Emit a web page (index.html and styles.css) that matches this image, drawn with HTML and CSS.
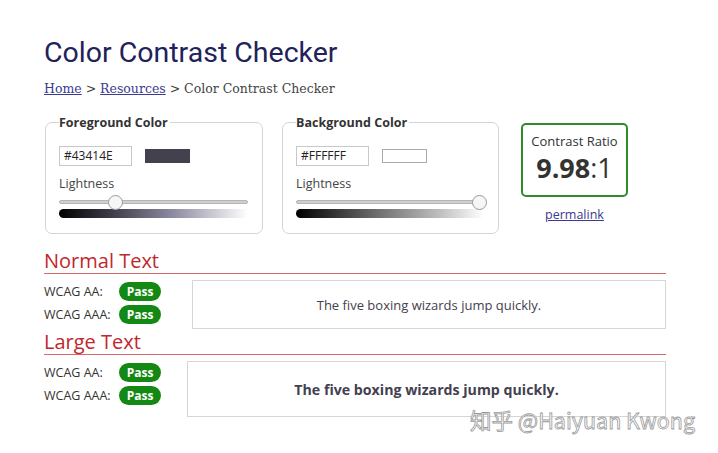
FILE: index.html
```html
<!DOCTYPE html>
<html lang="en">
<head>
    <meta charset="UTF-8">
    <title>Color Contrast Checker</title>
    <link rel="stylesheet" href="styles.css">
</head>
<body>
    <div class="container">
        <h1>Color Contrast Checker</h1>
        <p class="breadcrumb"><a href="#">Home</a> &gt; <a href="#">Resources</a> &gt; Color Contrast Checker</p>

        <!-- Selectores de color -->
        <div class="pickers">
            <fieldset class="picker">
                <legend>Foreground Color</legend>
                <div class="color-row">
                    <span class="hex">#43414E</span>
                    <span class="swatch swatch-fg"></span>
                </div>
                <div class="label">Lightness</div>
                <div class="slider">
                    <span class="thumb thumb-fg"></span>
                </div>
                <div class="gradient gradient-fg"></div>
            </fieldset>

            <fieldset class="picker">
                <legend>Background Color</legend>
                <div class="color-row">
                    <span class="hex">#FFFFFF</span>
                    <span class="swatch swatch-bg"></span>
                </div>
                <div class="label">Lightness</div>
                <div class="slider">
                    <span class="thumb thumb-bg"></span>
                </div>
                <div class="gradient gradient-bg"></div>
            </fieldset>

            <div class="result">
                <div class="ratio-box">
                    <div class="ratio-title">Contrast Ratio</div>
                    <div class="ratio"><b>9.98</b>:1</div>
                </div>
                <a class="permalink" href="#">permalink</a>
            </div>
        </div>

        <!-- Texto normal -->
        <h2>Normal Text</h2>
        <div class="test-row">
            <div class="checks">
                <div class="check"><span class="check-label">WCAG AA:</span><span class="pass">Pass</span></div>
                <div class="check"><span class="check-label">WCAG AAA:</span><span class="pass">Pass</span></div>
            </div>
            <div class="sample sample-normal">The five boxing wizards jump quickly.</div>
        </div>

        <!-- Texto grande -->
        <h2>Large Text</h2>
        <div class="test-row">
            <div class="checks">
                <div class="check"><span class="check-label">WCAG AA:</span><span class="pass">Pass</span></div>
                <div class="check"><span class="check-label">WCAG AAA:</span><span class="pass">Pass</span></div>
            </div>
            <div class="sample sample-large">The five boxing wizards jump quickly.</div>
        </div>
    </div>

    <div class="watermark">知乎 @Haiyuan Kwong</div>
</body>
</html>
```

FILE: styles.css
```css
body {
    margin: 0;
    background-color: #fff;
    color: #333;
    font-family: 'Open Sans', sans-serif;
}

.container {
    position: relative;
    width: 622px;
    padding: 36px 0 0 44px;
}

h1 {
    font-family: 'Roboto', sans-serif;
    font-weight: 400;
    font-size: 28.5px;
    color: #22225a;
    margin: 0;
    line-height: 34px;
}

.breadcrumb {
    font-family: 'DejaVu Serif', serif;
    font-size: 12.5px;
    color: #444;
    margin: 11px 0 0;
    line-height: 16px;
}

.breadcrumb a {
    color: #3a3a90;
}

/* Selectores */
.pickers {
    display: flex;
    align-items: flex-start;
    margin-top: 17px;
}

.picker {
    box-sizing: border-box;
    width: 218px;
    height: 120px;
    margin: 0 18px 0 1px;
    padding: 15px 14px 0 13px;
    border: 1px solid #d4d4d4;
    border-radius: 7px;
}

.picker + .picker {
    width: 217px;
    margin-right: 22px;
}

legend {
    font-weight: 700;
    font-size: 12.5px;
    color: #333;
    padding: 0 2px 0 0;
    margin-left: 0;
}

.color-row {
    display: flex;
    align-items: center;
    gap: 13px;
}

.hex {
    box-sizing: border-box;
    width: 73px;
    height: 20px;
    border: 1px solid #c8c8c8;
    font-size: 12px;
    line-height: 18px;
    padding-left: 4px;
    color: #222;
}

.swatch {
    width: 45px;
    height: 14px;
    box-sizing: border-box;
}

.swatch-fg {
    background-color: #43414e;
}

.swatch-bg {
    background-color: #fff;
    border: 1px solid #aaa;
}

.label {
    font-size: 12.5px;
    color: #444;
    margin-top: 9px;
    line-height: 17px;
}

.slider {
    position: relative;
    height: 4px;
    margin-top: 8px;
    border-radius: 2px;
    background-color: #cfcfcf;
    border: 1px solid #b5b5b5;
    box-sizing: border-box;
}

.thumb {
    position: absolute;
    top: -6px;
    width: 13px;
    height: 13px;
    border-radius: 50%;
    border: 1px solid #999;
    background-color: #f6f6f6;
}

.thumb-fg {
    left: 48px;
}

.thumb-bg {
    left: 175px;
}

.gradient {
    height: 9px;
    margin-top: 5px;
    border-radius: 5px;
}

.gradient-fg {
    background: linear-gradient(to right, #000, #43414e 30%, #8c8aa0 60%, #fff);
}

.gradient-bg {
    background: linear-gradient(to right, #000, #666 40%, #bbb 75%, #fff);
}

/* Resultado */
.result {
    display: flex;
    flex-direction: column;
    align-items: center;
    width: 107px;
    margin-top: 9px;
}

.ratio-box {
    box-sizing: border-box;
    width: 107px;
    height: 74px;
    border: 2px solid #2e8b2e;
    border-radius: 5px;
    text-align: center;
    padding-top: 7px;
}

.ratio-title {
    font-size: 13px;
    color: #333;
    line-height: 18px;
}

.ratio {
    font-size: 27px;
    line-height: 30px;
    margin-top: 3px;
    color: #333;
}

.permalink {
    margin-top: 9px;
    font-size: 12.5px;
    color: #3a3a90;
}

/* Secciones */
h2 {
    font-weight: 400;
    font-size: 20px;
    color: #c1272d;
    margin: 0;
    line-height: 25px;
    border-bottom: 1px solid #d9686b;
}

.pickers + h2 {
    margin-top: 14px;
}

.test-row {
    display: flex;
    align-items: flex-start;
    margin-top: 6px;
}

.checks {
    width: 148px;
}

.check {
    display: flex;
    align-items: center;
    height: 23px;
}

.check-label {
    width: 75px;
    font-size: 12.5px;
    color: #333;
}

.pass {
    width: 42px;
    height: 19px;
    border-radius: 10px;
    background-color: #138913;
    color: #fff;
    font-weight: 700;
    font-size: 12px;
    line-height: 19px;
    text-align: center;
}

.sample {
    flex: 1;
    box-sizing: border-box;
    border: 1px solid #d6d6d6;
    display: flex;
    align-items: center;
    justify-content: center;
    color: #43414e;
}

.sample-normal {
    height: 49px;
    font-size: 13px;
}

.sample-large {
    height: 56px;
    margin-left: -5px;
    font-size: 14.2px;
    font-weight: 700;
}

.test-row + h2 {
    margin-top: 0;
}

/* Marca de agua */
.watermark {
    position: absolute;
    left: 470px;
    top: 404px;
    font-family: 'Noto Sans CJK SC', sans-serif;
    font-size: 21.5px;
    color: #fff;
    -webkit-text-stroke: 0.8px #9a9a9a;
}
```
